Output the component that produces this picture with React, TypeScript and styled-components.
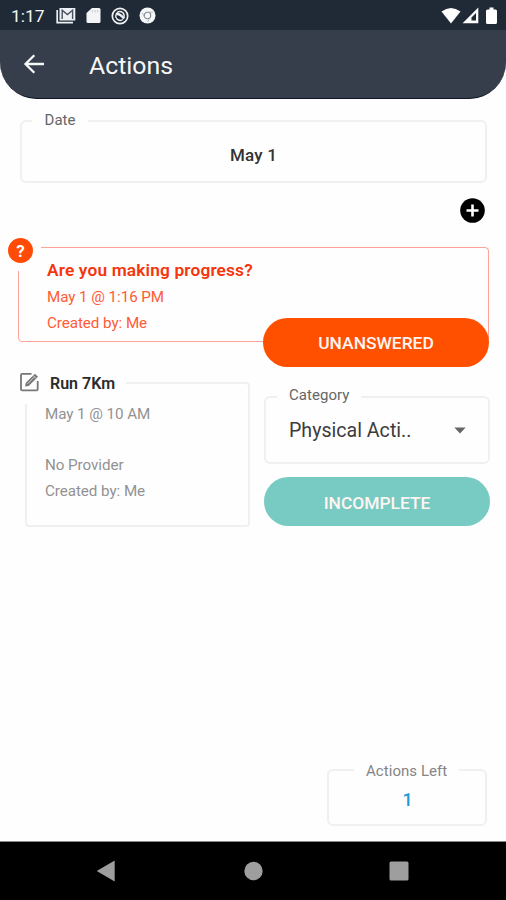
import React from 'react';
import styled, { createGlobalStyle } from 'styled-components';

const GlobalStyle = createGlobalStyle`
  * { box-sizing: border-box; }
  body { margin: 0; background: #fefefe; font-family: Roboto, "Liberation Sans", sans-serif; }
`;

const Screen = styled.div`
  width: 506px;
  height: 900px;
  display: flex;
  flex-direction: column;
  background: #fefefe;
  overflow: hidden;
`;

const StatusBar = styled.div`
  height: 30px;
  flex: none;
  display: flex;
  align-items: center;
  padding: 1px 7px 0 11px;
  background: #1f2a36;
  color: #f4f6f8;
`;

const Clock = styled.span`
  width: 45px;
  font-size: 17.4px;
  line-height: 28px;
`;

const Notifications = styled.div`
  display: flex;
  align-items: center;
  flex: 1;
  gap: 10px;
`;

const Signals = styled.div`
  display: flex;
  align-items: center;
  gap: 1px;
`;

const Header = styled.header`
  height: 69px;
  flex: none;
  display: flex;
  align-items: center;
  padding: 0 0 0 22px;
  background: #353e4a;
  border-bottom: 1px solid #0d1526;
  border-radius: 0 0 37px 37px;
`;

const Title = styled.h1`
  margin: 3px 0 0 43px;
  font-size: 24.8px;
  font-weight: 400;
  line-height: 32px;
  color: #f6f7f8;
`;

const Content = styled.main`
  flex: 1;
  display: flex;
  flex-direction: column;
  padding: 21px 17px 15px 18px;
`;

const Outline = styled.section<{ $tone?: string }>`
  position: relative;
  border: 2px solid ${(p) => p.$tone ?? '#f0f0f0'};
  border-radius: 6px;
`;

const Legend = styled.span<{ $left: number; $pad: number; $color?: string; $top?: number }>`
  position: absolute;
  top: ${(p) => p.$top ?? -12}px;
  left: ${(p) => p.$left}px;
  padding: 0 ${(p) => p.$pad}px;
  font-size: 15px;
  font-weight: 400;
  line-height: 20px;
  letter-spacing: 0.05px;
  white-space: nowrap;
  background: #fefefe;
  color: ${(p) => p.$color ?? '#666'};
`;

const DateField = styled(Outline)`
  height: 63px;
  margin: 0 2px 0 2px;
  display: flex;
  justify-content: center;
  padding-top: 21px;
  font-size: 17px;
  font-weight: 500;
  line-height: 24px;
  letter-spacing: 0.2px;
  color: #333;
`;

const AddRow = styled.div`
  height: 64px;
  display: flex;
  justify-content: flex-end;
  padding: 15px 4px 0 0;
`;

const QuestionCard = styled(Outline)`
  height: 95px;
  border-width: 1px;
  border-radius: 4px;
  padding: 9px 0 0 28px;
  color: #ff5b35;
`;

const QuestionBadge = styled.div`
  position: absolute;
  top: -10px;
  left: -13px;
  width: 35px;
  height: 33px;
  padding-left: 2px;
  background: #fefefe;
`;

const BadgeMark = styled.div`
  width: 25px;
  height: 25px;
  border-radius: 50%;
  background: #ff4b05;
  color: #fff;
  font-size: 17px;
  font-weight: 700;
  line-height: 26px;
  text-align: center;
`;

const QuestionTitle = styled.div`
  height: 28px;
  font-size: 17.3px;
  font-weight: 600;
  line-height: 27px;
  letter-spacing: 0.16px;
  color: #f4350d;
`;

const Detail = styled.div`
  height: 25.5px;
  font-size: 15.2px;
  line-height: 25px;
  letter-spacing: -0.06px;
  white-space: nowrap;
`;

const PillButton = styled.button<{ $fill: string }>`
  width: 226px;
  height: 49px;
  border: 0;
  padding: 2px 0 0;
  border-radius: 25px;
  background: ${(p) => p.$fill};
  color: #fff5f2;
  font-family: inherit;
  font-size: 17.4px;
  font-weight: 500;
`;

const AnswerButton = styled(PillButton)`
  position: absolute;
  right: -1px;
  bottom: -26px;
  padding-top: 1px;
`;

const ActionRow = styled.div`
  display: flex;
  justify-content: space-between;
  margin-top: 40px;
  padding-left: 7px;
`;

const ActionCard = styled(Outline)`
  width: 225px;
  height: 145px;
  border-radius: 4px;
  padding: 18px 0 0 18px;
  color: #929292;
`;

const ActionName = styled.div`
  position: absolute;
  top: -16px;
  left: -9px;
  height: 36px;
  padding: 4px 11px 0 2px;
  display: flex;
  align-items: flex-start;
  gap: 11px;
  background: #fefefe;
  font-size: 16px;
  font-weight: 600;
  line-height: 24px;
  color: #2b2b2b;
  white-space: nowrap;
`;

const Controls = styled.div`
  display: flex;
  flex-direction: column;
  gap: 13px;
  width: 226px;
  padding-top: 14px;
  margin-right: -1px;
`;

const Select = styled(Outline)`
  height: 68px;
  width: 226px;
  display: flex;
  align-items: center;
  justify-content: space-between;
  padding: 1px 22px 0 23px;
  font-size: 19.6px;
  color: #3c3c3c;
`;

const Counter = styled(Outline)`
  width: 160px;
  height: 57px;
  margin: auto 2px 0 auto;
  padding: 17px 0 0 1px;
  text-align: center;
  font-size: 18px;
  font-weight: 500;
  line-height: 24px;
  color: #2199dc;
`;

const NavBar = styled.nav`
  height: 59px;
  flex: none;
  display: grid;
  grid-template-columns: 96px 147px 146px 1fr;
  align-items: center;
  border-top: 1px solid #8a8a8a;
  background: #000;
  & > :first-child { grid-column: 2; }
`;

const MailIcon = () => (
  <svg width="20" height="17" viewBox="0 0 20 17" fill="none">
    <path d="M1.2 3v12.7H17" stroke="#eef1f4" strokeWidth="1.7" />
    <path d="M3.5 1h15.8v12.5H3.5z" fill="#eef1f4" />
    <path d="M6.2 12V3.3l5.2 4.3 5.2-4.3V12" stroke="#48525e" strokeWidth="1.4" />
  </svg>
);

const CardIcon = () => (
  <svg width="15" height="17" viewBox="0 0 15 17">
    <path d="M6 1h7q1.5 0 1.5 1.5v12q0 1.5-1.5 1.5H2Q.5 16 .5 14.5V6z" fill="#f4f5f6" />
    <path d="M6.3 3v2.5M9 3v2.5M11.7 3v2.5" stroke="#c2c7cb" strokeWidth="1" />
  </svg>
);

const SyncIcon = () => (
  <svg width="18" height="18" viewBox="0 0 18 18" fill="none" stroke="#eef1f4">
    <circle cx="9" cy="9" r="7.7" strokeWidth="1.7" />
    <path d="M5.8 5.7Q9 3.3 12 5.8q2 2.5.6 5.6M12 12.5Q8.8 14.5 6 12.1q-1.9-2.2-1.1-4.7" strokeWidth="1.4" />
    <path d="M5 7.2q3.4-1.2 8 4.3" strokeWidth="2.3" />
  </svg>
);

const ChromeIcon = () => (
  <svg width="17" height="17" viewBox="0 0 17 17" fill="none">
    <circle cx="8.5" cy="8.5" r="8" fill="#f6f7f8" />
    <circle cx="8.5" cy="8.5" r="3.2" stroke="#7c848c" strokeWidth="1.1" />
    <path d="M8.5 5.2H14M5.7 10.2 3.3 6M11.3 10.2 8.5 15" stroke="#a9afb5" strokeWidth=".9" />
  </svg>
);

const WifiIcon = () => (
  <svg width="20" height="17" viewBox="0 0 20 17">
    <path d="M.5 4.5Q10-2.6 19.5 4.5L10 16.5z" fill="#fff" />
  </svg>
);

const CellIcon = () => (
  <svg width="17" height="17" viewBox="0 0 17 17">
    <path d="M16.3.5v15.7H.6z" fill="#fff" />
    <path d="M14 6v7.500H9.500V10.500z" fill="#1f2a36" />
  </svg>
);

const BatteryIcon = () => (
  <svg width="19" height="18" viewBox="0 0 19 18">
    <path d="M9.500.5h4v2h2q1.500 0 1.500 1.500v11.500q0 1.500-1.500 1.500h-8Q6 17 6 15.500V4q0-1.500 1.500-1.500h2z" fill="#fff" />
  </svg>
);

const BackArrow = () => (
  <svg width="24" height="24" viewBox="0 0 24 24" fill="none" stroke="#f6f7f8" strokeWidth="2.3">
    <path d="M22 12H3.5M12.3 3.2 3.5 12l8.8 8.8" />
  </svg>
);

const PlusIcon = () => (
  <svg width="25" height="25" viewBox="0 0 25 25">
    <circle cx="12.5" cy="12.5" r="12.3" fill="#000" />
    <path d="M12.5 6.5v12M6.5 12.5h12" stroke="#fff" strokeWidth="2.6" />
  </svg>
);

const EditIcon = () => (
  <svg width="19" height="20" viewBox="0 0 19 20" fill="none">
    <path d="M11.5 1.8H2.2Q1 1.8 1 3v14.2q0 1.2 1.2 1.2h14.3q1.2 0 1.2-1.2V9" stroke="#777" strokeWidth="1.8" />
    <path d="m5 14.5.8-3.700L14.900 1.700 18 4.800 8.700 13.900z" fill="#777" />
    <path d="m13.100 3.500 3.100 3.100M7.500 11.800l6.500-6.500" stroke="#eee" strokeWidth=".8" />
  </svg>
);

const Caret = () => (
  <svg width="12" height="7" viewBox="0 0 12 7">
    <path d="M.3.5h11.4L6 6.5z" fill="#666" />
  </svg>
);

export default function App() {
  return (
    <Screen>
      <GlobalStyle />
      <StatusBar>
        <Clock>1:17</Clock>
        <Notifications>
          <MailIcon />
          <CardIcon />
          <SyncIcon />
          <ChromeIcon />
        </Notifications>
        <Signals>
          <WifiIcon />
          <CellIcon />
          <BatteryIcon />
        </Signals>
      </StatusBar>
      <Header>
        <BackArrow />
        <Title>Actions</Title>
      </Header>
      <Content>
        <DateField>
          <Legend $left={10} $pad={12.5}>Date</Legend>
          May 1
        </DateField>
        <AddRow>
          <PlusIcon />
        </AddRow>
        <QuestionCard $tone="#ffa298">
          <QuestionBadge>
            <BadgeMark>?</BadgeMark>
          </QuestionBadge>
          <QuestionTitle>Are you making progress?</QuestionTitle>
          <Detail>May 1 @ 1:16 PM</Detail>
          <Detail>Created by: Me</Detail>
          <AnswerButton $fill="#ff5000">UNANSWERED</AnswerButton>
        </QuestionCard>
        <ActionRow>
          <ActionCard>
            <ActionName>
              <EditIcon />
              Run 7Km
            </ActionName>
            <Detail>May 1 @ 10 AM</Detail>
            <Detail />
            <Detail>No Provider</Detail>
            <Detail>Created by: Me</Detail>
          </ActionCard>
          <Controls>
            <Select>
              <Legend $left={11} $pad={12} $top={-13}>Category</Legend>
              Physical Acti..
              <Caret />
            </Select>
            <PillButton $fill="#78cbc2">INCOMPLETE</PillButton>
          </Controls>
        </ActionRow>
        <Counter>
          <Legend $left={25} $pad={12} $top={-10} $color="#858585">Actions Left</Legend>
          1
        </Counter>
      </Content>
      <NavBar>
        <svg width="20" height="22" viewBox="0 0 20 22"><path d="M.7 11 18.7.5v21z" fill="#9e9e9e" /></svg>
        <svg width="20" height="20" viewBox="0 0 20 20"><circle cx="10.5" cy="10" r="9.2" fill="#9e9e9e" /></svg>
        <svg width="20" height="20" viewBox="0 0 20 20"><rect x=".5" y=".5" width="19" height="19" rx="1.5" fill="#9e9e9e" /></svg>
      </NavBar>
    </Screen>
  );
}
